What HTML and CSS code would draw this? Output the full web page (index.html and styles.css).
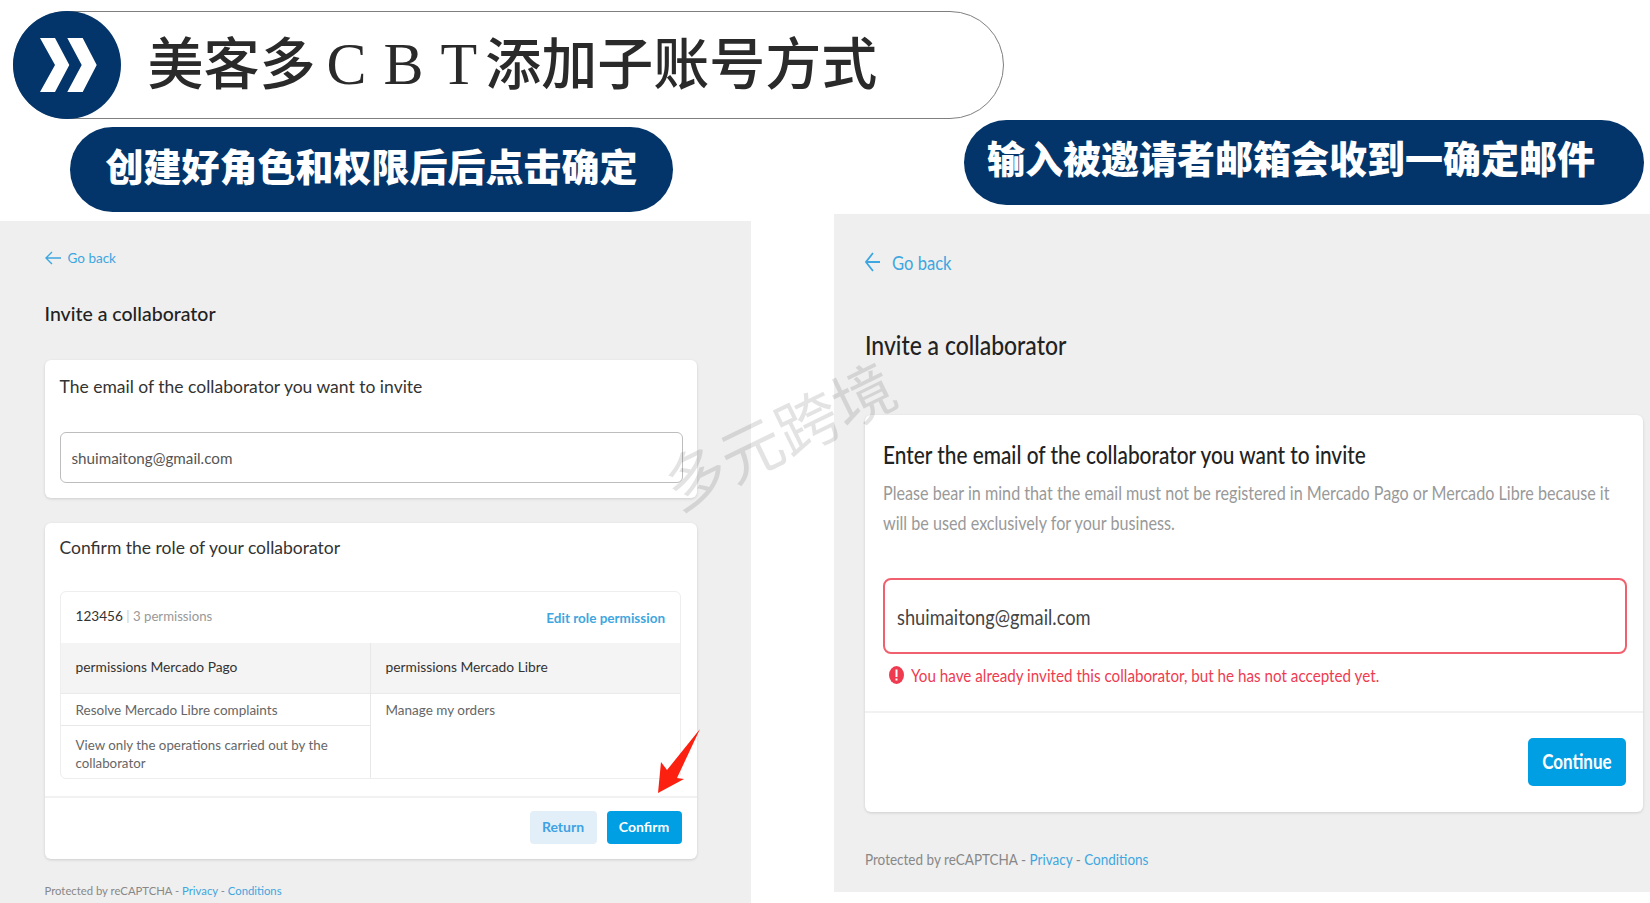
FILE: index.html
```html
<!DOCTYPE html>
<html>

<head>
    <meta charset="utf-8">
    <meta name="viewport" content="width=device-width">
    <title>美客多CBT添加子账号方式</title>
    <link rel="stylesheet" href="styles.css">
</head>

<body>
    <div class="slide">

        <div class="banner">
            <div class="banner-badge">
                <svg width="108" height="108" viewBox="0 0 108 108">
                    <polygon fill="#fff" points="27,27 42,27 56.3,54 42,81 27,81 42,54" />
                    <polygon fill="#fff" points="54.3,27 69.7,27 83.7,54 69.7,81 54.3,81 68.7,54" />
                </svg>
            </div>
            <h1 class="banner-title">美客多<span class="latin">CBT</span>添加子账号方式</h1>
        </div>

        <div class="columns">

            <!-- left screenshot -->
            <div class="column">
                <div class="step step-left">创建好角色和权限后后点击确定</div>

                <div class="shot shot-left">
                    <div class="back">
                        <svg width="16" height="14" viewBox="0 0 16 14">
                            <path d="M7 1 L1 7 L7 13 M1 7 H16" fill="none" stroke="#3ea6e0" stroke-width="1.4" />
                        </svg>
                        <span>Go back</span>
                    </div>
                    <h2 class="shot-title">Invite a collaborator</h2>

                    <div class="card card-email">
                        <div class="card-title">The email of the collaborator you want to invite</div>
                        <div class="input">shuimaitong@gmail.com</div>
                    </div>

                    <div class="card card-role">
                        <div class="card-title">Confirm the role of your collaborator</div>

                        <div class="role">
                            <div class="role-top">
                                <div><span class="role-name">123456</span> <span class="role-count"><i>|</i> 3 permissions</span></div>
                                <a class="link role-edit">Edit role permission</a>
                            </div>
                            <div class="role-grid">
                                <div class="role-col">
                                    <div class="role-head">permissions Mercado Pago</div>
                                    <div class="role-item">Resolve Mercado Libre complaints</div>
                                    <div class="role-item role-item-tall">View only the operations carried out by the collaborator</div>
                                </div>
                                <div class="role-col">
                                    <div class="role-head">permissions Mercado Libre</div>
                                    <div class="role-item role-item-plain">Manage my orders</div>
                                </div>
                            </div>
                        </div>

                        <div class="card-foot">
                            <button class="btn btn-soft">Return</button>
                            <button class="btn btn-main">Confirm</button>
                        </div>
                    </div>

                    <div class="legal">Protected by reCAPTCHA - <a class="link">Privacy</a> - <a class="link">Conditions</a></div>
                </div>
            </div>

            <!-- right screenshot, squeezed sideways like the original capture -->
            <div class="column">
                <div class="step step-right">输入被邀请者邮箱会收到一确定邮件</div>

                <div class="shot shot-right">
                    <div class="back">
                        <svg width="15" height="20" viewBox="0 0 15 20">
                            <path d="M8 1 L1 10 L8 19 M1 10 H15" fill="none" stroke="#3ea6e0" stroke-width="1.8" />
                        </svg>
                        <span class="squeeze">Go back</span>
                    </div>
                    <h2 class="shot-title"><span class="squeeze">Invite a collaborator</span></h2>

                    <div class="card">
                        <div class="card-body">
                            <div class="card-title"><span class="squeeze">Enter the email of the collaborator you want to invite</span></div>
                            <div class="hint">
                                <span class="squeeze">Please bear in mind that the email must not be registered in Mercado Pago or Mercado Libre because it</span>
                                <span class="squeeze">will be used exclusively for your business.</span>
                            </div>
                            <div class="input input-error"><span class="squeeze">shuimaitong@gmail.com</span></div>
                            <div class="error">
                                <svg width="15" height="18" viewBox="0 0 15 18">
                                    <ellipse cx="7.5" cy="9" rx="7.5" ry="9" fill="#ee3b50" />
                                    <rect x="6.5" y="3.5" width="2" height="7.5" fill="#fff" />
                                    <rect x="6.5" y="12.5" width="2" height="2" fill="#fff" />
                                </svg>
                                <span class="squeeze">You have already invited this collaborator, but he has not accepted yet.</span>
                            </div>
                        </div>
                        <div class="card-foot">
                            <button class="btn btn-main btn-big"><span class="squeeze-mid">Continue</span></button>
                        </div>
                    </div>

                    <div class="legal"><span class="squeeze">Protected by reCAPTCHA - <a class="link">Privacy</a> - <a class="link">Conditions</a></span></div>
                </div>
            </div>

        </div>

        <div class="watermark">多元跨境</div>

        <svg class="pointer" width="50" height="70" viewBox="0 0 50 70">
            <polygon fill="#fb2010" points="45,2 22,51 29,52 3,66 6,35 12,43" />
        </svg>
    </div>
</body>

</html>
```

FILE: styles.css
```css
body {
    margin: 0;
    background-color: #fff;
    font-family: Lato, "Noto Sans CJK SC", sans-serif;
}

.slide {
    position: relative;
    width: 1650px;
    height: 903px;
    overflow: hidden;
}

/* top banner */
.banner {
    display: flex;
    align-items: center;
    box-sizing: border-box;
    width: 991px;
    height: 108px;
    margin: 11px 0 0 13px;
    border: 1.5px solid #7f7f7f;
    border-radius: 54px;
}

.banner-badge {
    flex: none;
    width: 108px;
    height: 108px;
    margin-left: -1.5px;
    border-radius: 50%;
    background-color: #03356a;
}

.banner-title {
    margin: 0 0 6px 27px;
    font-family: "Noto Sans CJK SC", sans-serif;
    font-size: 56px;
    font-weight: 500;
    line-height: 100px;
    color: #2a2a2a;
    white-space: nowrap;
}

.latin {
    margin-left: 11px;
    margin-right: -9px;
    font-family: "Liberation Serif", serif;
    font-size: 60px;
    font-weight: 400;
    letter-spacing: 17px;
}

.columns {
    display: grid;
    grid-template-columns: 751px 816px;
    column-gap: 83px;
}

/* dark step labels */
.step {
    display: flex;
    align-items: center;
    justify-content: center;
    box-sizing: border-box;
    height: 85px;
    margin-bottom: 9px;
    padding-bottom: 10px;
    border-radius: 43px;
    background-color: #03356a;
    font-family: "Noto Sans CJK SC", sans-serif;
    font-size: 38px;
    font-weight: 900;
    color: #fff;
    white-space: nowrap;
}

.step-left {
    width: 603px;
    margin-top: 8px;
    margin-left: 70px;
}

.step-right {
    width: 680px;
    margin-top: 1px;
    margin-left: 130px;
    padding-right: 26px;
    padding-bottom: 12px;
}

/* screenshots */
.shot {
    box-sizing: border-box;
    background-color: #efefef;
}

.shot-left {
    height: 682px;
    padding: 27px 54.5px 0 44.5px;
}

.shot-right {
    height: 678px;
    padding: 36px 7px 0 31px;
}

.back {
    display: flex;
    align-items: center;
    gap: 7px;
    height: 20px;
    font-size: 13.5px;
    color: #3ea6e0;
}

.shot-title {
    margin: 34px 0;
    font-size: 19.5px;
    font-weight: 500;
    line-height: 24px;
    color: #222;
}

.card {
    border-radius: 6px;
    background-color: #fff;
    box-shadow: 0 1px 3px rgba(0, 0, 0, .14);
}

.card-email {
    padding: 15px 14px 15px 15px;
}

.card-role {
    margin-top: 25px;
    padding-top: 13px;
}

.card-title {
    font-size: 17.5px;
    line-height: 24px;
    color: #333;
}

.card-role .card-title {
    padding: 0 15px;
}

.input {
    box-sizing: border-box;
    height: 51px;
    margin-top: 33px;
    padding-left: 11px;
    border: 1px solid #bdbdbd;
    border-radius: 6px;
    font-size: 15.2px;
    line-height: 50px;
    color: #555;
}

/* role table */
.role {
    margin: 31px 15.5px 0 15px;
    border: 1px solid #eee;
    border-radius: 6px;
    overflow: hidden;
    font-size: 13.5px;
    color: #666;
}

.role-top {
    display: flex;
    justify-content: space-between;
    box-sizing: border-box;
    height: 51px;
    padding: 15px 15px 0;
    line-height: 18px;
}

.role-name {
    font-size: 13.6px;
    color: #333;
}

.role-count {
    font-size: 13.2px;
    color: #999;
}

.role-count i {
    font-style: normal;
    color: #ccc;
}

.role-edit {
    padding-top: 2px;
    font-size: 13.5px;
    font-weight: 700;
}

.link {
    color: #3ea6e0;
}

.role-grid {
    display: grid;
    grid-template-columns: 309px 1fr;
    height: 135px;
}

.role-col + .role-col {
    border-left: 1px solid #e8e8e8;
}

.role-head {
    box-sizing: border-box;
    height: 51px;
    padding: 0 15px;
    background-color: #f4f4f4;
    font-size: 13.8px;
    line-height: 48px;
    color: #333;
    border-bottom: 1px solid #eaeaea;
}

.role-item {
    box-sizing: border-box;
    height: 32px;
    padding: 7px 15px 0;
    line-height: 18px;
    border-bottom: 1px solid #e8e8e8;
}

.role-item-tall {
    height: 52px;
    border-bottom: 0;
    padding: 10px 25px 0 15px;
    font-size: 13.3px;
}

.role-item-plain {
    border-bottom: 0;
}

.card-foot {
    display: flex;
    justify-content: flex-end;
    gap: 10px;
    margin-top: 17px;
    padding: 13px 15px 15px;
    border-top: 2px solid #f1f1f1;
}

.btn {
    height: 33px;
    padding: 0 0 2px;
    border: 0;
    border-radius: 4px;
    font-family: Lato, sans-serif;
    font-size: 14px;
    font-weight: 700;
}

.btn-soft {
    width: 67px;
    background-color: #e3eff8;
    color: #3ea2e3;
}

.btn-main {
    width: 75px;
    background-color: #009ee3;
    color: #fff;
}

.legal {
    margin-top: 24px;
    font-size: 11.3px;
    line-height: 16px;
    color: #888;
}

/* right screenshot is wider text pressed narrower */
.squeeze {
    display: inline-block;
    transform: scaleX(.85);
    transform-origin: left center;
    white-space: nowrap;
}

.squeeze-mid {
    display: inline-block;
    transform: scaleX(.85);
}

.shot-right .back {
    gap: 12px;
    height: 24px;
    font-size: 19.5px;
}

.shot-right .shot-title {
    margin: 55px 0 54px;
    font-size: 27px;
    line-height: 32px;
}

.card-body {
    padding: 25px 16px 0 18px;
}

.shot-right .card-title {
    font-size: 24.5px;
    font-weight: 500;
    line-height: 30px;
    color: #222;
}

.hint {
    margin-top: 8px;
    font-size: 19px;
    line-height: 29.5px;
    color: #999;
}

.hint .squeeze {
    display: block;
}

.input-error {
    height: 76px;
    margin-top: 41px;
    padding-left: 12px;
    border: 2px solid #f0606e;
    border-radius: 8px;
    font-size: 21.5px;
    line-height: 74px;
    color: #444;
}

.error {
    display: flex;
    align-items: center;
    gap: 7px;
    height: 22px;
    margin-top: 10px;
    padding-left: 6px;
    font-size: 17.9px;
    color: #ee3b50;
}

.shot-right .card-foot {
    margin-top: 25px;
    padding: 25px 17px 26px;
}

.btn-big {
    width: 98px;
    height: 48px;
    border-radius: 5px;
    font-size: 20px;
}

.shot-right .legal {
    margin-top: 37px;
    font-size: 15.9px;
    line-height: 20px;
}

/* overlays */
.watermark {
    position: absolute;
    left: 638px;
    top: 393px;
    width: 280px;
    font-family: "Noto Sans CJK SC", sans-serif;
    font-size: 62px;
    font-weight: 400;
    line-height: 80px;
    text-align: center;
    white-space: nowrap;
    color: rgba(0, 0, 0, .11);
    transform: rotate(-26deg);
}

.pointer {
    position: absolute;
    left: 655px;
    top: 727px;
}
```
